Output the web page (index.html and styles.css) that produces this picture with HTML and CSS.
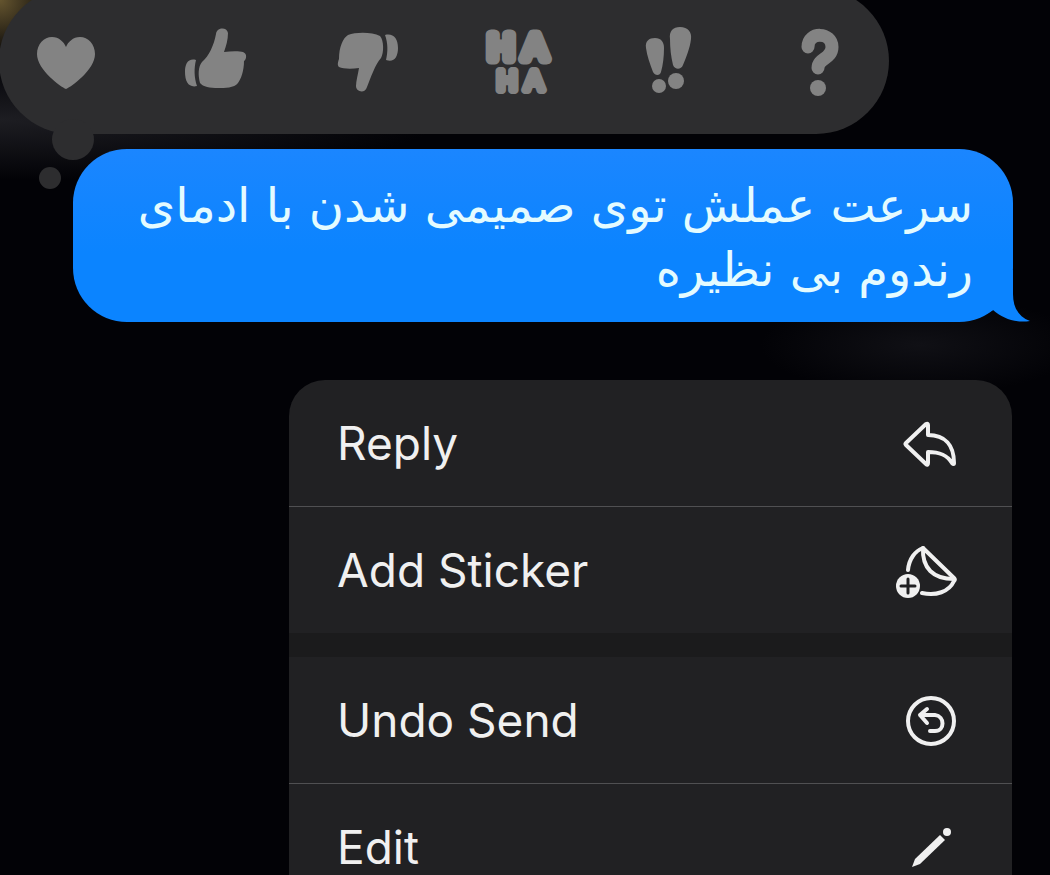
FILE: index.html
```
<!DOCTYPE html>
<html lang="en">
<head>
    <meta charset="UTF-8">
    <meta name="viewport" content="width=device-width, initial-scale=1.0">
    <title>Messages</title>
    <link rel="stylesheet" href="styles.css">
</head>
<body>

    <main class="screen">
        <!-- Tapback reactions -->
        <div class="reactions">
            <button class="reaction" type="button" aria-label="Love">
                <svg viewBox="0 0 68 72"><path d="M34 64C29 62 5 45 5 29C5 19 12 12 20 12C27 12 32 17 34 22C36 17 41 12 48 12C56 12 63 19 63 29C63 45 39 62 34 64Z"/></svg>
            </button>
            <button class="reaction" type="button" aria-label="Like">
                <svg viewBox="0 0 68 72">
                    <path d="M17 58C15 50 15 42 19 37C26 31 31 20 33 9C34 2 44 2 45 8C45 15 43 21 41 27C48 26 57 26 60 27C65 29 63 35 61 36C61 46 58 54 55 58C51 63 42 63 35 63C27 63 20 62 17 58Z"/>
                    <path d="M13 35C5 33 2 39 2 47C2 57 6 63 14 61C11 52 11 43 13 35Z"/>
                </svg>
            </button>
            <button class="reaction" type="button" aria-label="Dislike">
                <svg viewBox="0 0 68 72">
                    <path d="M5 42C3 40 4 37 5 34C5 22 9 13 14 10C22 7 38 7 46 11C50 15 50 28 47 33C41 40 37 52 33 62C31 69 22 67 22 61C22 56 24 49 25 43C18 44 9 44 5 42Z"/>
                    <path d="M51 10C59 8 64 13 64 23C64 32 60 38 52 35C54 27 54 18 51 10Z"/>
                </svg>
            </button>
            <button class="reaction" type="button" aria-label="Laugh">
                <svg class="haha" viewBox="0 0 68 72">
                    <text class="haha-big" x="17 51" y="34">HA</text>
                    <text class="haha-small" x="23 50" y="65">HA</text>
                </svg>
            </button>
            <button class="reaction" type="button" aria-label="Emphasize">
                <svg viewBox="0 0 68 72">
                    <path d="M11 23C10 16 14 13 20 13C26 13 29 17 29 23C29 31 28 40 26 47C25 51 20 51 18 47C15 39 12 31 11 23Z"/>
                    <circle cx="24" cy="61" r="7"/>
                    <path d="M35 14C34 6 38 2 45 2C53 2 57 7 56 14C55 23 51 33 48 40C46 45 40 45 38 40C36 32 35 23 35 14Z"/>
                    <circle cx="41" cy="56" r="8"/>
                </svg>
            </button>
            <button class="reaction" type="button" aria-label="Question">
                <svg viewBox="0 0 68 72">
                    <path class="hook" d="M22 22C22 6 46 7 46 22C46 34 32 33 32 43"/>
                    <circle cx="32" cy="63" r="8"/>
                </svg>
            </button>
        </div>

        <!-- Selected message -->
        <div class="bubble" lang="fa" dir="rtl">
            <p class="message">سرعت عملش توی صمیمی شدن با ادمای<br>رندوم بی نظیره</p>
            <svg class="tail" viewBox="0 0 48 52" aria-hidden="true"><path d="M0 0H31V24C31 38 37 47 48 51C34 53 21 49 11 40C8 42 4 44 0 46Z"/></svg>
        </div>

        <!-- Context menu -->
        <div class="menu">
            <button class="item" type="button">
                <span>Reply</span>
                <svg viewBox="0 0 62 56"><path d="M11 30Q10 29 11 28L31 9Q33 8 33 10V20C50 20 59 30 59 48Q59 50 57 48C52 40 45 37 33 37V48Q33 51 31 49Z"/></svg>
            </button>
            <button class="item" type="button">
                <span>Add Sticker</span>
                <svg viewBox="0 0 62 56">
                    <path d="M13 28C14 17 20 9 28 6L59 36C60 37 60 38 59 39C54 50 41 54 27 51"/>
                    <path d="M28 6C27 26 38 37 59 37"/>
                    <circle class="solid" cx="13" cy="44" r="12"/>
                    <path class="plus" d="M6 44H20M13 37V51"/>
                </svg>
            </button>
            <div class="gap"></div>
            <button class="item" type="button">
                <span>Undo Send</span>
                <svg viewBox="0 0 62 56">
                    <circle cx="36" cy="29" r="23"/>
                    <path d="M32 17L25 23L32 31M25 23H40C50 24 50 39 40 39H35"/>
                </svg>
            </button>
            <button class="item" type="button">
                <span>Edit</span>
                <svg viewBox="0 0 62 56">
                    <path class="solid" d="M45 16L50 21L25 45L17 48L20 40Z"/>
                    <circle class="solid" cx="52" cy="13" r="4"/>
                </svg>
            </button>
        </div>
    </main>

</body>
</html>
```
FILE: styles.css
```
* {
    box-sizing: border-box;
}

body {
    margin: 0;
    background: #020206;
    font-family: Inter, "Liberation Sans", sans-serif;
}

/* Dark backdrop with the blurred conversation showing through */
.screen {
    height: 100vh;
    overflow: hidden;
    background:
        radial-gradient(circle at 0 0, #65552f, transparent 60px),
        radial-gradient(ellipse 440px 60px at 0 120px, #1d1d22, transparent),
        radial-gradient(ellipse 160px 50px at 920px 345px, #101015, transparent),
        #020206;
}

button {
    border: 0;
    padding: 0;
    background: none;
    color: inherit;
    font: inherit;
    cursor: pointer;
}

/* Reactions bar, cut off by the top of the screen */
.reactions {
    position: relative;
    display: flex;
    justify-content: space-between;
    align-items: center;
    height: 146px;
    margin: -12px 161px 0 -1px;
    padding: 0 35px 0 33px;
    border-radius: 73px;
    background: #2d2d2f;
}

/* Thought bubble dots */
.reactions::before,
.reactions::after {
    content: "";
    position: absolute;
    border-radius: 50%;
    background: #2d2d2f;
}

.reactions::before {
    left: 53px;
    top: 131px;
    width: 42px;
    height: 41px;
}

.reactions::after {
    left: 40px;
    top: 179px;
    width: 22px;
    height: 22px;
}

.reaction svg {
    display: block;
    width: 68px;
    height: 72px;
    fill: #838383;
    overflow: visible;
}

.haha text {
    font-family: "Liberation Sans", sans-serif;
    text-anchor: middle;
    stroke: #838383;
    stroke-linejoin: round;
}

.haha-big {
    font-size: 35px;
    stroke-width: 11px;
}

.haha-small {
    font-size: 27px;
    stroke-width: 8px;
}

.reaction .hook {
    fill: none;
    stroke: #838383;
    stroke-width: 13px;
    stroke-linecap: round;
}

/* Message bubble */
.bubble {
    position: relative;
    margin: 15px 37px 0 73px;
    padding: 24px 40px 21px;
    border-radius: 54px;
    background: linear-gradient(#1b86ff, #0b84ff 60%);
    color: #e4fbff;
}

.message {
    margin: 0;
    font-family: "DejaVu Sans", sans-serif;
    font-size: 48px;
    line-height: 64px;
    white-space: nowrap;
}

.tail {
    position: absolute;
    right: -17px;
    bottom: 0;
    width: 48px;
    height: 52px;
    fill: #0b84ff;
}

/* Context menu */
.menu {
    margin: 58px 38px 0 289px;
    border-radius: 36px;
    background: #212123;
    color: #f0f0f0;
    overflow: hidden;
}

.item {
    display: flex;
    justify-content: space-between;
    align-items: center;
    width: 100%;
    height: 126px;
    padding: 0 55px 0 48px;
    font-size: 46px;
    line-height: 56px;
    text-align: left;
}

.item + .item {
    height: 127px;
    border-top: 1px solid #505052;
}

.gap {
    height: 24px;
    background: #1b1b1c;
}

.item svg {
    width: 62px;
    height: 56px;
    fill: none;
    stroke: #f0f0f0;
    stroke-width: 4px;
    stroke-linecap: round;
    stroke-linejoin: round;
}

.item .solid {
    fill: #f0f0f0;
    stroke: none;
}

.item .plus {
    stroke: #212123;
    stroke-width: 3px;
}
```
